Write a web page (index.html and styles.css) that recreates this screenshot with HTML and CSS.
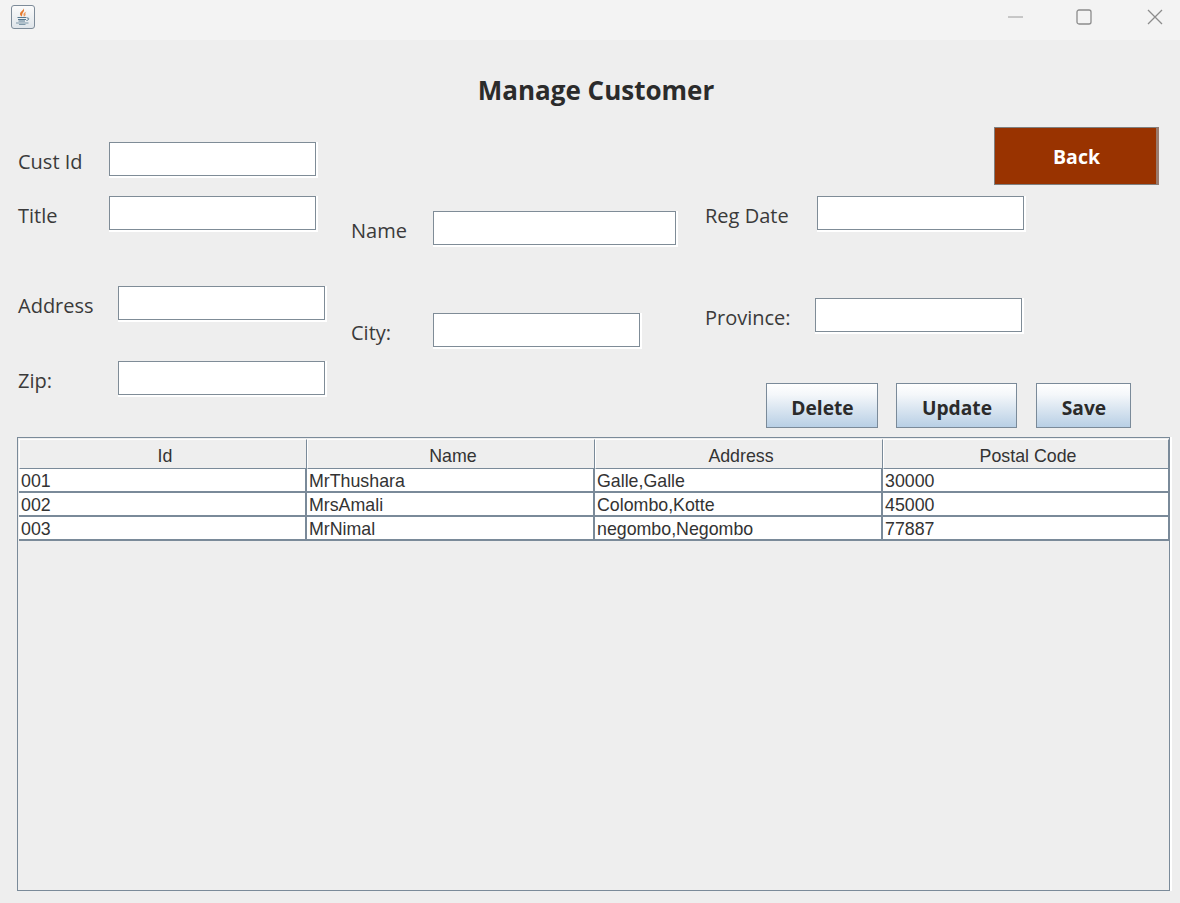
FILE: index.html
```html
<!DOCTYPE html>
<html lang="en">

<head>
    <meta charset="UTF-8">
    <meta name="viewport" content="width=device-width, initial-scale=1.0">
    <title>Manage Customer</title>
    <link rel="stylesheet" href="styles.css">
</head>

<body>
    <div class="titlebar">
        <span class="app-icon">
            <svg width="20" height="20" viewBox="0 0 20 20">
                <path d="M10.500 1C11.500 3 7 4.500 7 7c0 1 .8 1.800 1.500 2.500C9.500 8.500 9 7.500 9.500 6.500 10.300 5 12 3.500 10.500 1z" fill="#e67a2e"/>
                <path d="M13.500 4.500C11.500 5.500 10 6.500 10.500 8c.2.700.4 1.200.2 1.700 1.500-.5 2.300-1.500 1.800-2.700-.3-.9 0-1.500 1-2.500z" fill="#ee9a5c"/>
                <path d="M4.500 10.500h9M5 12.500h8M5.500 14h6.500M14 11c2.500-.5 2.500 2 -.5 2.500" stroke="#56788f" stroke-width="1" fill="none"/>
                <path d="M3 16h12.500M6 17.500h6.500" stroke="#7d97a8" stroke-width="1" fill="none"/>
            </svg>
        </span>
        <div class="window-controls">
            <svg class="win-min" width="16" height="16" viewBox="0 0 16 16"><path d="M0 8h15" stroke="#9a9a9a" fill="none"/></svg>
            <svg class="win-max" width="16" height="16" viewBox="0 0 16 16"><rect x="1" y="1" width="14" height="14" rx="2" stroke="#8c8c8c" stroke-width="1.300" fill="none"/></svg>
            <svg class="win-close" width="16" height="16" viewBox="0 0 16 16"><path d="M1 1l14 14M15 1L1 15" stroke="#8c8c8c" stroke-width="1.300" fill="none"/></svg>
        </div>
    </div>

    <div class="main">
        <h1>Manage Customer</h1>

        <div class="form-area">
            <div class="col">
                <div class="field field-custid">
                    <label class="w-91">Cust Id</label>
                    <input type="text">
                </div>
                <div class="field field-title">
                    <label class="w-91">Title</label>
                    <input type="text">
                </div>
                <div class="field field-address">
                    <label class="w-100">Address</label>
                    <input type="text">
                </div>
                <div class="field field-zip">
                    <label class="w-100">Zip:</label>
                    <input type="text">
                </div>
            </div>

            <div class="col">
                <div class="field field-name">
                    <label class="w-82">Name</label>
                    <input type="text" class="input-wide">
                </div>
                <div class="field field-city">
                    <label class="w-82">City:</label>
                    <input type="text">
                </div>
            </div>

            <div class="col">
                <div class="back-row">
                    <button class="btn-back">Back</button>
                </div>
                <div class="field field-regdate">
                    <label class="w-112">Reg Date</label>
                    <input type="text">
                </div>
                <div class="field field-province">
                    <label class="w-110">Province:</label>
                    <input type="text">
                </div>
                <div class="actions">
                    <button class="btn btn-delete">Delete</button>
                    <button class="btn btn-update">Update</button>
                    <button class="btn btn-save">Save</button>
                </div>
            </div>
        </div>

        <div class="table-wrap">
            <table id="dataTable">
                <thead>
                    <tr>
                        <th>Id</th>
                        <th>Name</th>
                        <th>Address</th>
                        <th>Postal Code</th>
                    </tr>
                </thead>
                <tbody>
                    <tr>
                        <td>001</td>
                        <td>MrThushara</td>
                        <td>Galle,Galle</td>
                        <td>30000</td>
                    </tr>
                    <tr>
                        <td>002</td>
                        <td>MrsAmali</td>
                        <td>Colombo,Kotte</td>
                        <td>45000</td>
                    </tr>
                    <tr>
                        <td>003</td>
                        <td>MrNimal</td>
                        <td>negombo,Negombo</td>
                        <td>77887</td>
                    </tr>
                </tbody>
            </table>
        </div>
    </div>
</body>

</html>
```

FILE: styles.css
```css
body {
    margin: 0;
    background-color: #eeeeee;
    color: #333333;
    font-family: "Open Sans", "Noto Sans", sans-serif;
}

/* title bar */
.titlebar {
    height: 40px;
    background-color: #f3f3f3;
    display: flex;
    justify-content: space-between;
    align-items: center;
    padding-left: 11px;
    box-sizing: border-box;
}

.app-icon {
    width: 24px;
    height: 24px;
    box-sizing: border-box;
    border: 1px solid #7d8b99;
    border-radius: 3px;
    background: linear-gradient(#fbfbfb, #dfe5ea);
    display: flex;
    align-items: center;
    justify-content: center;
    margin-bottom: 6px;
}

.window-controls {
    display: flex;
    margin-right: 17px;
    margin-bottom: 6px;
}

.win-max {
    margin-left: 52px;
}

.win-close {
    margin-left: 55px;
}

/* main part */
.main {
    padding: 0 10px 0 17px;
}

h1 {
    margin: 0;
    padding: 34px 0 20px 5px;
    font-size: 26px;
    line-height: 33px;
    font-weight: 700;
    text-align: center;
    color: #2b2b2b;
}

.form-area {
    display: grid;
    grid-template-columns: 333px 354px 1fr;
    padding: 0 11px 0 1px;
}

.col {
    display: flex;
    flex-direction: column;
}

.field {
    display: flex;
    align-items: center;
}

.field label {
    font-size: 20px;
    line-height: 28px;
    margin-top: 5px;
    flex-shrink: 0;
    color: #3a3a3a;
}

.w-82 { width: 82px; }
.w-91 { width: 91px; }
.w-100 { width: 100px; }
.w-110 { width: 110px; }
.w-112 { width: 112px; }

.field input {
    width: 207px;
    height: 34px;
    box-sizing: border-box;
    margin: 0;
    padding: 0 4px;
    background-color: #ffffff;
    border: 1px solid #7f8c97;
    border-radius: 0;
    box-shadow: 1px 1px 0 1px #ffffff;
    outline: none;
}

.field input.input-wide {
    width: 243px;
}

.field-custid { margin-top: 15px; }
.field-title { margin-top: 20px; }
.field-address { margin-top: 56px; }
.field-zip { margin-top: 41px; }
.field-name { margin-top: 84px; }
.field-city { margin-top: 68px; }
.field-regdate { margin-top: 11px; }
.field-province { margin-top: 68px; }

.back-row {
    display: flex;
    justify-content: flex-end;
}

.btn-back {
    width: 165px;
    height: 58px;
    margin: 0;
    padding: 1px 0 0 2px;
    background-color: #993300;
    border: 1px solid #7f7f7f;
    border-right-width: 3px;
    border-right-color: #9a7a6c;
    color: #ffffff;
    font-family: inherit;
    font-size: 19.5px;
    font-weight: 700;
}

/* action buttons */
.actions {
    display: flex;
    margin: 51px 0 0 61px;
}

.btn {
    height: 45px;
    margin: 0;
    padding: 4px 0 0 1px;
    box-sizing: border-box;
    border: 1px solid #7a8a99;
    background: linear-gradient(#ffffff, #f4f7fa 25%, #b8cfe5);
    color: #2b2b2b;
    font-family: inherit;
    font-size: 19.2px;
    font-weight: 700;
}

.btn-delete { width: 112px; }
.btn-update { width: 121px; margin-left: 18px; }
.btn-save { width: 95px; margin-left: 19px; }

/* customer table */
.table-wrap {
    margin-top: 9px;
    height: 454px;
    box-sizing: border-box;
    padding: 1px 0 0 1px;
    border: 1px solid #7a8a99;
    box-shadow: 1px 1px 0 1px #ffffff;
}

table {
    width: 100%;
    table-layout: fixed;
    border-collapse: separate;
    border-spacing: 0;
    font-family: "Liberation Sans", Arial, sans-serif;
    font-size: 17.8px;
    color: #333333;
}

th {
    height: 30px;
    box-sizing: border-box;
    padding: 4px 0 0 4px;
    font-weight: 400;
    text-align: center;
    background-color: #eeeeee;
    border-top: 1px solid #ffffff;
    border-left: 1px solid #ffffff;
    border-right: 1px solid #7a8a99;
    border-bottom: 1px solid #7a8a99;
}

td {
    height: 24px;
    box-sizing: border-box;
    padding: 2px 0 0 2px;
    background-color: #ffffff;
    border-right: 2px solid #7a8a99;
    border-bottom: 2px solid #7a8a99;
    line-height: 20px;
}

tbody tr:first-child td {
    padding-top: 1px;
}

th:nth-child(-n+3) {
    width: 288px;
}

th:last-child,
td:last-child {
    border-right-width: 1px;
}
```
